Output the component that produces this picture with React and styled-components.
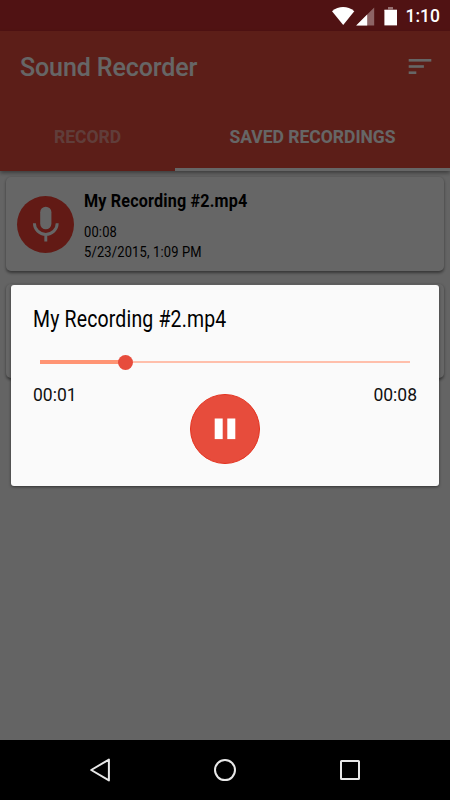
import React, { useState } from "react";
import styled, { createGlobalStyle } from "styled-components";

const recordings = [
  {
    id: 2,
    name: "My Recording #2.mp4",
    length: "00:08",
    date: "5/23/2015, 1:09 PM",
  },
  { id: 1 },
];

const App = () => {
  const [current] = useState(recordings[0]);
  const [progress] = useState(0.23);

  return (
    <Screen>
      <GlobalStyle />
      <StatusSpace />
      <Header>
        <Toolbar>
          <Title>Sound Recorder</Title>
          <SortIcon />
        </Toolbar>
        <Tabs>
          <Tab $width="175px">RECORD</Tab>
          <Tab $width="275px" $active>
            SAVED RECORDINGS
          </Tab>
        </Tabs>
      </Header>

      <List>
        {recordings.map((item) => (
          <Card key={item.id}>
            {item.name && (
              <>
                <MicCircle>
                  <MicIcon />
                </MicCircle>
                <CardInfo>
                  <CardTitle>{item.name}</CardTitle>
                  <CardText>{item.length}</CardText>
                  <CardText>{item.date}</CardText>
                </CardInfo>
              </>
            )}
          </Card>
        ))}
      </List>

      <Scrim />

      <StatusBar>
        <StatusIcons />
        <Clock>1:10</Clock>
      </StatusBar>

      <Dialog>
        <DialogTitle>{current.name}</DialogTitle>
        <Track>
          <Played style={{ width: `${progress * 100}%` }} />
          <Thumb />
          <Remaining />
        </Track>
        <Times>
          <span>00:01</span>
          <span>{current.length}</span>
        </Times>
        <PauseButton>
          <PauseIcon />
        </PauseButton>
      </Dialog>

      <NavBar>
        <svg width="24" height="26" viewBox="0 0 24 26">
          <path d="M3.2 13 L20.9 2.6 V23.4 Z" />
        </svg>
        <svg width="24" height="26" viewBox="0 0 24 26">
          <circle cx="12" cy="13.1" r="10" />
        </svg>
        <svg width="24" height="26" viewBox="0 0 24 26">
          <rect x="3" y="4" width="18" height="18" rx="0.5" />
        </svg>
      </NavBar>
    </Screen>
  );
};

export default App;

const SortIcon = () => (
  <svg width="24" height="16" viewBox="0 0 24 16" fill="#fff">
    <rect x="0.7" y="0" width="22.6" height="2.6" />
    <rect x="0.7" y="6.2" width="15.2" height="2.6" />
    <rect x="0.7" y="12.4" width="7.6" height="2.6" />
  </svg>
);

const MicIcon = () => (
  <svg width="28" height="38" viewBox="0 0 28 38">
    <rect x="8.2" y="1.7" width="11.2" height="22.6" rx="5.6" fill="#fff" />
    <path
      d="M2.4 18.2 A11.4 11.2 0 0 0 25.2 18.2 M13.8 29.4 V36.6"
      fill="none"
      stroke="#fff"
      strokeWidth="2.9"
    />
  </svg>
);

const PauseIcon = () => (
  <svg width="22" height="22" viewBox="0 0 22 22" fill="#fff">
    <rect x="0.7" y="0.5" width="8" height="20.6" />
    <rect x="13.3" y="0.5" width="8" height="20.6" />
  </svg>
);

const StatusIcons = () => (
  <svg width="66" height="20" viewBox="0 0 66 20" fill="#fff">
    <path d="M0 5.2 C6.8 -0.4 15.5 -0.4 22.3 5.2 L11.2 18.9 Z" />
    <path d="M42.2 1.6 V19.4 H24.2 Z" opacity="0.35" />
    <path d="M35.2 8.6 V19.4 H24.2 Z" />
    <path d="M52.4 3.2 H56 V1 H61 V3.2 H65 V5 H52.4 Z" opacity="0.4" />
    <path d="M52.4 4 H65 V19.4 H52.4 Z" />
  </svg>
);

const GlobalStyle = createGlobalStyle`
  * {
    box-sizing: border-box;
  }
  body {
    margin: 0;
    font-family: Roboto, "Liberation Sans", sans-serif;
  }
`;

const Screen = styled.div`
  position: relative;
  display: flex;
  flex-direction: column;
  width: 450px;
  height: 800px;
  overflow: hidden;
  background: #fafafa;
`;

const StatusSpace = styled.div`
  height: 31px;
  background: #c92f30;
`;

const Header = styled.header`
  height: 140px;
  background: #e74c3c;
  box-shadow: 0 2px 4px rgba(0, 0, 0, 0.4);
`;

const Toolbar = styled.div`
  display: flex;
  align-items: center;
  justify-content: space-between;
  height: 71px;
  padding: 0 18px 0 20px;
`;

const Title = styled.h1`
  margin: 2px 0 0;
  font-size: 25px;
  font-weight: 500;
  line-height: 30px;
  letter-spacing: -0.1px;
  color: #fff;
`;

const Tabs = styled.nav`
  display: flex;
  height: 69px;
`;

const Tab = styled.div`
  width: ${(props) => props.$width};
  padding-top: 25px;
  font-size: 17.5px;
  font-weight: 700;
  line-height: 20px;
  text-align: center;
  color: ${(props) => (props.$active ? "#fff" : "#ffffff73")};
  border-bottom: 3px solid ${(props) => (props.$active ? "#fff" : "#e74c3c")};
`;

const List = styled.main`
  display: flex;
  flex-direction: column;
  gap: 13px;
  padding: 6px;
`;

const Card = styled.article`
  display: flex;
  align-items: center;
  height: 94px;
  padding-left: 11px;
  border-radius: 5px;
  background: #fff;
  box-shadow: 0 1.5px 3px rgba(0, 0, 0, 0.45);
`;

const MicCircle = styled.div`
  display: flex;
  align-items: center;
  justify-content: center;
  width: 57px;
  height: 57px;
  border-radius: 50%;
  background: #f44336;
`;

const CardInfo = styled.div`
  padding: 3px 0 0 10px;
`;

const Condensed = styled.p`
  margin: 0;
  width: max-content;
  transform: scaleX(${(props) => props.$squeeze || 0.86});
  transform-origin: left;
  letter-spacing: 0.2px;
  color: #000;
`;

const CardTitle = styled(Condensed).attrs({ $squeeze: 0.85 })`
  margin-bottom: 9px;
  font-size: 19px;
  font-weight: 700;
  line-height: 24px;
`;

const CardText = styled(Condensed)`
  font-size: 15px;
  line-height: 20.5px;
`;

const Scrim = styled.div`
  position: absolute;
  inset: 0;
  background: rgba(0, 0, 0, 0.6);
`;

const StatusBar = styled.div`
  position: absolute;
  top: 0;
  right: 0;
  display: flex;
  align-items: center;
  gap: 8px;
  height: 31px;
  padding-right: 10px;
`;

const Clock = styled.span`
  padding-top: 1px;
  font-size: 17.5px;
  font-weight: 500;
  color: #fff;
`;

const Dialog = styled.section`
  position: absolute;
  top: 285px;
  left: 11px;
  display: flex;
  flex-direction: column;
  width: 428px;
  height: 201px;
  padding: 20px 22px;
  border-radius: 3px;
  background: #fafafa;
  box-shadow: 0 1px 3px rgba(0, 0, 0, 0.5);
`;

const DialogTitle = styled(Condensed).attrs({ $squeeze: 0.837 })`
  font-size: 23.25px;
  line-height: 28px;
`;

const Track = styled.div`
  display: flex;
  align-items: center;
  height: 16px;
  margin: 21px 7px 0;
`;

const Played = styled.div`
  height: 4px;
  margin-right: -7px;
  background: #ff9474;
`;

const Thumb = styled.div`
  z-index: 1;
  width: 15px;
  height: 15px;
  border-radius: 50%;
  background: #e74c3c;
`;

const Remaining = styled.div`
  flex: 1;
  height: 2px;
  background: #ffbfab;
`;

const Times = styled.div`
  display: flex;
  justify-content: space-between;
  margin-top: 15px;
  font-size: 17.5px;
  line-height: 20px;
  color: #111;
`;

const PauseButton = styled.button`
  display: flex;
  flex-shrink: 0;
  align-items: center;
  align-self: center;
  justify-content: center;
  width: 70px;
  height: 70px;
  margin-top: -11px;
  padding: 0;
  border: 1px solid #e4321f;
  border-radius: 50%;
  background: #e74c3c;
`;

const NavBar = styled.footer`
  position: absolute;
  bottom: 0;
  left: 0;
  display: flex;
  align-items: center;
  justify-content: center;
  gap: 101px;
  width: 100%;
  height: 60px;
  background: #000;

  svg {
    fill: none;
    stroke: #e8e8e8;
    stroke-width: 2;
    stroke-linejoin: round;
  }
`;
